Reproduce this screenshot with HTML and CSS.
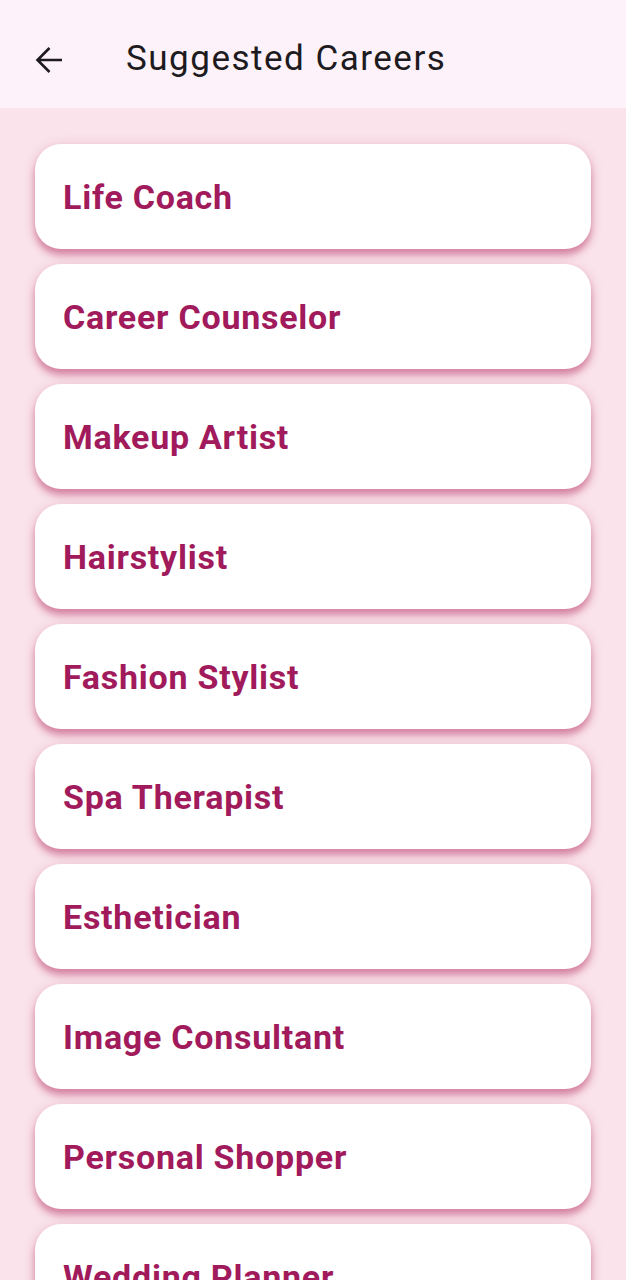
FILE: index.html
```html
<!DOCTYPE html>
<html>
<head>
<meta charset="utf-8">
<link rel="stylesheet" href="styles.css">
</head>
<body>
<header class="appbar">
  <svg class="back" width="30" height="30" viewBox="0 0 30 30"><path d="M28 15H3.5M15.5 3L3.5 15l12 12" fill="none" stroke="#1d1b20" stroke-width="2.6" stroke-linecap="butt" stroke-linejoin="miter"/></svg>
  <h1 class="title">Suggested Careers</h1>
</header>
<main class="list">
  <div class="card">Life Coach</div>
  <div class="card">Career Counselor</div>
  <div class="card">Makeup Artist</div>
  <div class="card">Hairstylist</div>
  <div class="card">Fashion Stylist</div>
  <div class="card">Spa Therapist</div>
  <div class="card">Esthetician</div>
  <div class="card">Image Consultant</div>
  <div class="card">Personal Shopper</div>
  <div class="card">Wedding Planner</div>
</main>
</body>
</html>
```
FILE: styles.css
```css
html, body {
  margin: 0;
  padding: 0;
}
body {
  width: 626px;
  height: 1280px;
  overflow: hidden;
  background: #fae3ea;
  font-family: Roboto, "Noto Sans", sans-serif;
}
.appbar {
  height: 108px;
  background: #fdf2f9;
  display: flex;
  align-items: center;
  padding-left: 34px;
  box-sizing: border-box;
}
.back {
  display: block;
  align-self: flex-start;
  margin-top: 45px;
}
.title {
  margin: 8px 0 0 62px;
  font-size: 35px;
  font-weight: 400;
  letter-spacing: 1.5px;
  color: #1d1b20;
}
.list {
  padding: 36px 35px 0;
  display: flex;
  flex-direction: column;
  gap: 15px;
}
.card {
  height: 105px;
  flex: none;
  background: #ffffff;
  border-radius: 26px;
  box-shadow: 0 6px 7px rgba(185, 60, 110, 0.5), 0 2px 12px rgba(200, 90, 130, 0.25);
  display: flex;
  align-items: center;
  padding-left: 28px;
  box-sizing: border-box;
  font-size: 34px;
  font-weight: 700;
  letter-spacing: 0.75px;
  color: #a11a5b;
}
```
